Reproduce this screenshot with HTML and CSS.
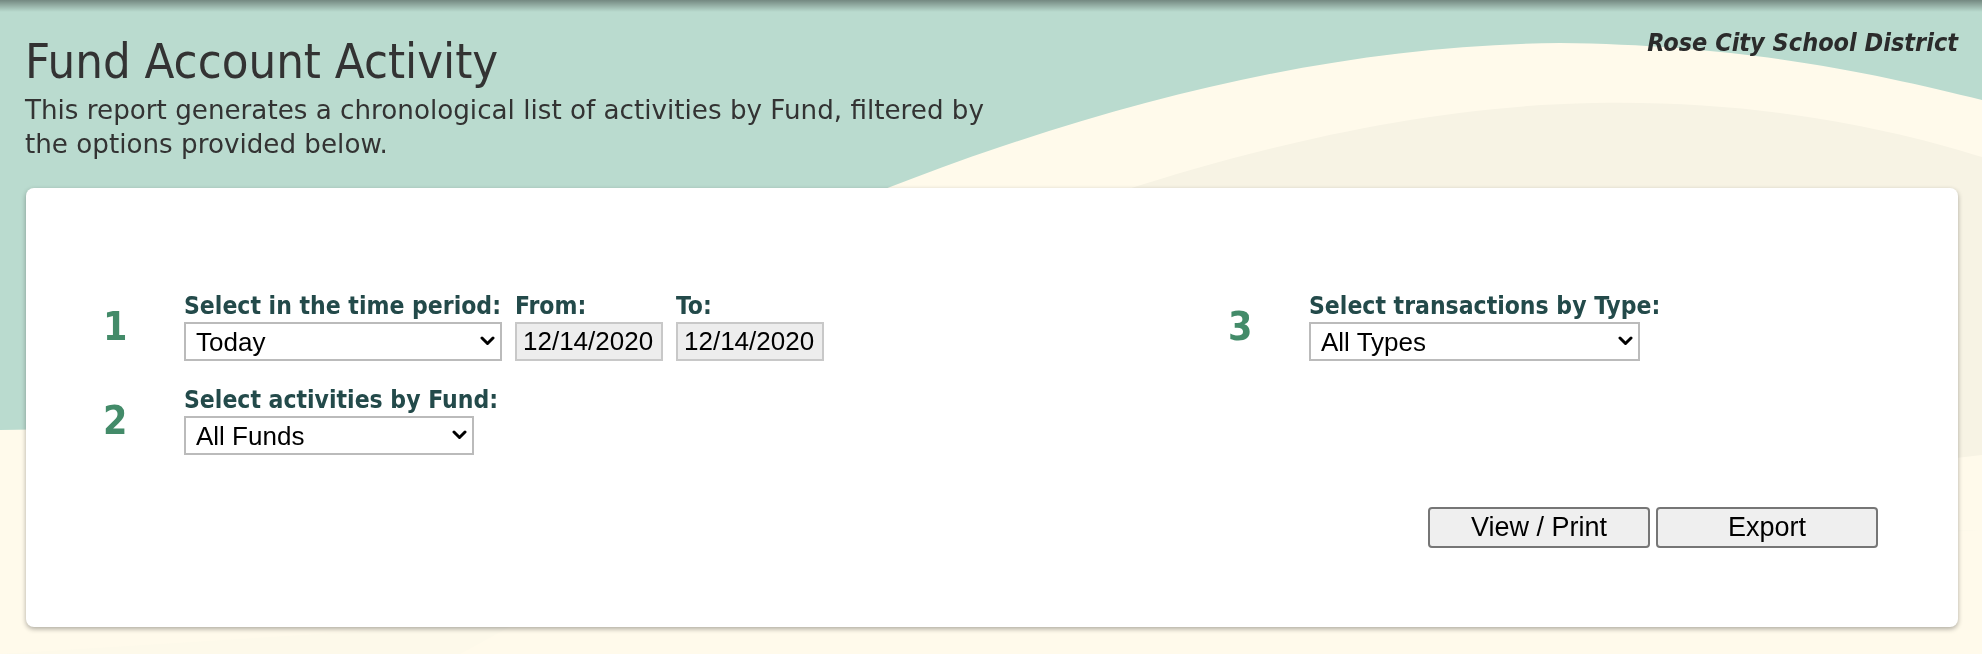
FILE: index.html
```html
<!DOCTYPE html>
<html lang="en">
<head>
    <meta charset="UTF-8">
    <meta name="viewport" content="width=device-width, initial-scale=1.0">
    <title>Fund Account Activity</title>
    <link rel="stylesheet" href="styles.css">
</head>
<body>
    <!-- page backdrop: mint sky with cream waves -->
    <svg class="backdrop" viewBox="0 0 1982 654" preserveAspectRatio="none" aria-hidden="true">
        <defs>
            <linearGradient id="topShade" x1="0" y1="0" x2="0" y2="1">
                <stop offset="0" stop-color="#000" stop-opacity="0.38"/>
                <stop offset="1" stop-color="#000" stop-opacity="0"/>
            </linearGradient>
        </defs>
        <rect x="0" y="0" width="1982" height="654" fill="#fffaeb"/>
        <path d="M0,654 L460,654 C560,600 620,560 700,530 L1982,530 Z" fill="#fdf9ea"/>
        <path d="M1982,157 C1880,125 1750,100 1594,103 C1420,106 1250,150 1125,190 C950,250 800,340 650,480 L1500,500 C1700,490 1850,470 1982,455 Z" fill="#f7f3e4"/>
        <path d="M0,0 H1982 V100 C1880,75 1750,45 1560,43 C1380,45 1200,80 1000,147 C720,240 400,430 0,430 Z" fill="#badbcf"/>
        <rect x="0" y="0" width="1982" height="12" fill="url(#topShade)"/>
    </svg>

    <header class="page-header">
        <div class="page-title">
            <h1>Fund Account Activity</h1>
            <p>This report generates a chronological list of activities by Fund, filtered by the options provided below.</p>
        </div>
        <div class="district-name">Rose City School District</div>
    </header>

    <div class="report-card">
        <div class="option-grid">
            <div class="option-col">
                <div class="option-step">
                    <div class="step-number">1</div>
                    <div class="step-fields">
                        <div class="field">
                            <label>Select in the time period:</label>
                            <div class="select-wrap period-select">
                                <select><option>Today</option></select>
                                <svg class="chevron" viewBox="0 0 15 10"><path d="M2 2 L7.5 7.5 L13 2" /></svg>
                            </div>
                        </div>
                        <div class="field">
                            <label>From:</label>
                            <input class="date-input" type="text" value="12/14/2020" readonly>
                        </div>
                        <div class="field">
                            <label>To:</label>
                            <input class="date-input" type="text" value="12/14/2020" readonly>
                        </div>
                    </div>
                </div>

                <div class="option-step">
                    <div class="step-number">2</div>
                    <div class="step-fields">
                        <div class="field">
                            <label>Select activities by Fund:</label>
                            <div class="select-wrap fund-select">
                                <select><option>All Funds</option></select>
                                <svg class="chevron" viewBox="0 0 15 10"><path d="M2 2 L7.5 7.5 L13 2" /></svg>
                            </div>
                        </div>
                    </div>
                </div>
            </div>

            <div class="option-col">
                <div class="option-step">
                    <div class="step-number">3</div>
                    <div class="step-fields">
                        <div class="field">
                            <label>Select transactions by Type:</label>
                            <div class="select-wrap type-select">
                                <select><option>All Types</option></select>
                                <svg class="chevron" viewBox="0 0 15 10"><path d="M2 2 L7.5 7.5 L13 2" /></svg>
                            </div>
                        </div>
                    </div>
                </div>
            </div>
        </div>

        <div class="report-actions">
            <button id="viewBtn">View / Print</button>
            <button id="exportBtn">Export</button>
        </div>
    </div>
</body>
</html>
```

FILE: styles.css
```css
body {
    font-family: "DejaVu Sans Condensed", "DejaVu Sans", sans-serif;
    font-stretch: condensed;
    margin: 0;
    color: #333;
    background-color: #fffaeb;
    min-height: 654px;
}

.backdrop {
    position: fixed;
    top: 0;
    left: 0;
    width: 100%;
    height: 100%;
    z-index: -1;
}

/* Header */
.page-header {
    display: flex;
    justify-content: space-between;
    align-items: flex-start;
    padding: 0 24px 0 25px;
}

.page-title h1 {
    margin: 33px 0 0;
    font-size: 48.6px;
    line-height: 56px;
    font-weight: normal;
    color: #333;
}

.page-title p {
    margin: 4px 0 0;
    max-width: 990px;
    font-family: "DejaVu Sans", sans-serif;
    font-stretch: normal;
    font-size: 26.2px;
    line-height: 34px;
    color: #333;
}

.district-name {
    margin-top: 28px;
    font-size: 25px;
    line-height: 30px;
    font-weight: bold;
    font-style: italic;
    color: #2b2b2b;
}

/* Report card */
.report-card {
    margin: 27px 24px 0 26px;
    padding: 104px 80px 79px 77px;
    background-color: #fff;
    border-radius: 8px;
    box-shadow: 0 2px 5px rgba(0, 0, 0, 0.32);
}

.option-grid {
    display: grid;
    grid-template-columns: 1125px 1fr;
}

.option-step {
    display: flex;
    align-items: center;
    margin-bottom: 25px;
}

.option-step:last-child {
    margin-bottom: 0;
}

.step-number {
    width: 81px;
    flex-shrink: 0;
    font-size: 39px;
    font-weight: bold;
    color: #438b69;
}

.step-fields {
    display: flex;
    gap: 13px;
}

.field label {
    display: block;
    font-size: 24.5px;
    line-height: 28px;
    font-weight: bold;
    color: #234a4a;
    margin-bottom: 2px;
    white-space: nowrap;
}

.select-wrap {
    position: relative;
}

.select-wrap select {
    appearance: none;
    -webkit-appearance: none;
    width: 100%;
    height: 39px;
    margin: 0;
    padding: 0 30px 0 10px;
    border: 2px solid #bbb;
    border-radius: 0;
    background-color: #fff;
    font-family: "Liberation Sans", Arial, sans-serif;
    font-size: 26px;
    color: #000;
}

.chevron {
    position: absolute;
    right: 7px;
    top: 14px;
    width: 15px;
    height: 10px;
    pointer-events: none;
}

.chevron path {
    fill: none;
    stroke: #000;
    stroke-width: 3;
    stroke-linecap: round;
    stroke-linejoin: round;
}

.period-select {
    width: 318px;
}

.fund-select {
    width: 290px;
}

.type-select {
    width: 331px;
}

.date-input {
    box-sizing: border-box;
    width: 148px;
    height: 39px;
    margin: 0;
    padding: 0 6px;
    border: 2px solid #c8c8c8;
    background-color: #ededed;
    font-family: "Liberation Sans", Arial, sans-serif;
    font-size: 26px;
    color: #000;
}

/* Actions */
.report-actions {
    display: flex;
    justify-content: flex-end;
    gap: 6px;
    margin-top: 52px;
}

.report-actions button {
    width: 222px;
    height: 41px;
    padding: 0;
    background-color: #efefef;
    border: 2px solid #767676;
    border-radius: 4px;
    font-family: "Liberation Sans", Arial, sans-serif;
    font-size: 27px;
    color: #000;
    cursor: pointer;
}

.report-actions button:hover {
    background-color: #e5e5e5;
}
```
